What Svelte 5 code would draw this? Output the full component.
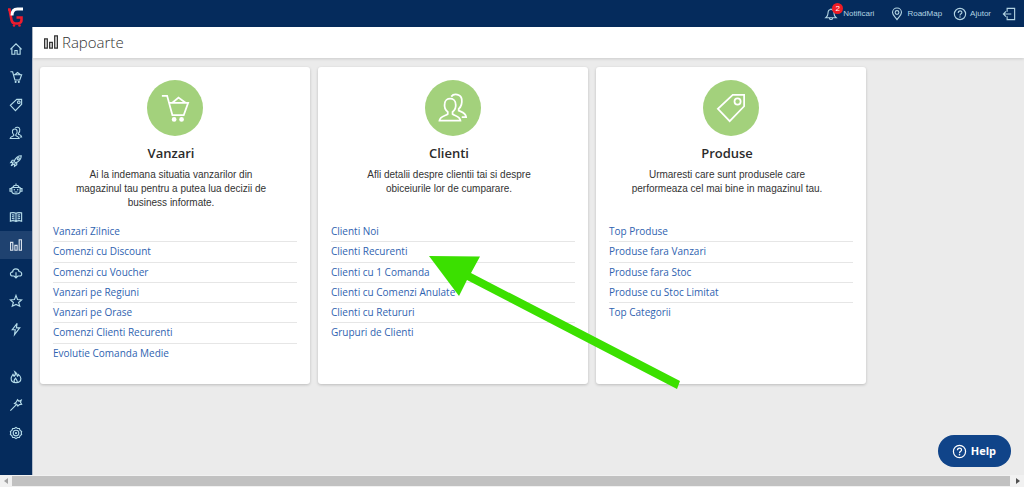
<script>
  const mainNav = [
    { icon: 'home', label: 'Acasa' },
    { icon: 'cart', label: 'Comenzi' },
    { icon: 'tag', label: 'Produse' },
    { icon: 'users', label: 'Clienti' },
    { icon: 'rocket', label: 'Marketing' },
    { icon: 'robot', label: 'Automatizari' },
    { icon: 'book', label: 'Continut' },
    { icon: 'chart', label: 'Rapoarte', active: true },
    { icon: 'cloud', label: 'Import' },
    { icon: 'star', label: 'Aplicatii' },
    { icon: 'bolt', label: 'Integrari' }
  ];

  const toolNav = [
    { icon: 'flame', label: 'Noutati' },
    { icon: 'wand', label: 'Design' },
    { icon: 'gear', label: 'Setari' }
  ];

  const cards = [
    {
      icon: 'cart',
      title: 'Vanzari',
      text: 'Ai la indemana situatia vanzarilor din magazinul tau pentru a putea lua decizii de business informate.',
      links: ['Vanzari Zilnice', 'Comenzi cu Discount', 'Comenzi cu Voucher', 'Vanzari pe Regiuni', 'Vanzari pe Orase', 'Comenzi Clienti Recurenti', 'Evolutie Comanda Medie']
    },
    {
      icon: 'users',
      title: 'Clienti',
      text: 'Afli detalii despre clientii tai si despre obiceiurile lor de cumparare.',
      links: ['Clienti Noi', 'Clienti Recurenti', 'Clienti cu 1 Comanda', 'Clienti cu Comenzi Anulate', 'Clienti cu Retururi', 'Grupuri de Clienti'],
      arrow: true
    },
    {
      icon: 'tag',
      title: 'Produse',
      text: 'Urmaresti care sunt produsele care performeaza cel mai bine in magazinul tau.',
      links: ['Top Produse', 'Produse fara Vanzari', 'Produse fara Stoc', 'Produse cu Stoc Limitat', 'Top Categorii']
    }
  ];
</script>

{#snippet icon(name)}
  <svg class="icon" viewBox="0 0 32 32" aria-hidden="true">
    {#if name === 'home'}
      <path d="M1 17 16 2l15 15M5 14v16h8V20h6v10h8V14" />
    {:else if name === 'cart'}
      <path d="M1 2h6l6 22h13l5-14H10M13 10l7-6 8 6" />
      <circle class="solid" cx="15" cy="29" r="2.700" /><circle class="solid" cx="23.500" cy="29" r="2.700" />
    {:else if name === 'tag'}
      <path d="M18 1h13v13L14.500 31 1 17Z" /><circle cx="23.5" cy="8.5" r="3.500" />
    {:else if name === 'users'}
      <path d="M10 20.500C7 18 6 14 6.500 11c.5-7.500 12-7.500 12.500 0 .5 3-.5 7-3.500 9.500V23c2 2 8.500 2 9 7.500H.5C1 25 8 25 10 23Z" />
      <path d="M14 3c3-4 11-3 12 3 .5 4 0 8-3.500 11v2c3 1.500 8 2 8.500 7.500h-5" />
    {:else if name === 'rocket'}
      <path d="M11 17C15 7 22 2 30 2c0 8-5 15-15 19ZM12 14H6l-4 6 8-1M18 20v6l-6 4 1-8M8 21l-5 8 8-5" />
      <circle cx="22" cy="10" r="3" />
    {:else if name === 'robot'}
      <path d="M5 12h22v10c0 4-5 7-11 7S5 26 5 22ZM8 12c0-4 3-6 8-6s8 2 8 6M16 6V1M5 15H0v7h5M27 15h5v7h-5M12 24h8" />
      <circle class="solid" cx="11.5" cy="18" r="2" /><circle class="solid" cx="20.500" cy="18" r="2" />
    {:else if name === 'book'}
      <path d="M16 6C11 3 6 4 1 5v22c5-2 10-2 15 1 5-3 10-3 15-1V5c-5-1-10-2-15 1ZM16 6v22M5 10l7 1M5 15l7 1M5 20l7 1M20 11l7-1M20 16l7-1M20 21l7-1" />
    {:else if name === 'chart'}
      <path d="M1.500 9h6v21h-6ZM13 17h6v13h-6ZM24.500 2h6v28h-6Z" />
    {:else if name === 'cloud'}
      <path d="M11 24H8C-1 24-1 13 7 13 8 2 23 3 24 12c10 1 9 12 1 12h-4M16 14v15M11 24l5 5 5-5" />
    {:else if name === 'star'}
      <path d="m16 1 4 11 11 1-8 7 3 10-10-5-10 5 3-10-8-7 11-1Z" />
    {:else if name === 'bolt'}
      <path d="M19 1 6 18h8l-2 13 14-18h-9Z" />
    {:else if name === 'flame'}
      <path d="M13 2c7 4 5 10 7 12 2-1 2-3 2-5 4 3 7 7 7 11 0 7-6 11-13 11S3 27 3 20c0-5 3-8 5-11 1 2 1 4 3 5 4-3 4-8 2-12Z" />
      <path d="M12 30c-3-4-1-7 3-11 1 4 6 6 4 11" />
    {:else if name === 'wand'}
      <path d="M1 31 17 15M20 2l4 4 6-3-2 6 3 5-6 1-4 4-3-5-6-2 5-4Z" />
    {:else if name === 'gear'}
      <path d="m16 1 4 3 5 0 2 5 4 3-1 4 1 4-4 3-2 5-5 0-4 3-4-3-5 0-2-5-4-3 1-4-1-4 4-3 2-5 5 0Z" />
      <circle cx="16" cy="16" r="7.500" /><circle class="solid" cx="16" cy="16" r="3" />
    {:else if name === 'bell'}
      <path d="M16 4c-6 0-8 4-8 10 0 7-3 9-6 12h28c-3-3-6-5-6-12 0-6-2-10-8-10ZM16 4V1M12 27c0 5 8 5 8 0" />
    {:else if name === 'pin'}
      <path d="M16 31C10 23 4 18 4 12a12 12 0 0 1 24 0c0 6-6 11-12 19Z" /><circle cx="16" cy="12" r="5" />
    {:else if name === 'help'}
      <circle cx="16" cy="16" r="15" />
      <path d="M11 13c0-7 10-7 10-1 0 4-5 3-5 8" /><circle class="solid" cx="16" cy="24" r="2" />
    {:else if name === 'exit'}
      <path d="M11 10V1h20v30H11v-9M22 16H1M8 9l-7 7 7 7" />
    {/if}
  </svg>
{/snippet}

<div class="app">
  <div class="shell">
    <aside>
      <a class="brand" href="#home" aria-label="Panou principal">
        <svg viewBox="0 0 16 20" aria-hidden="true">
          <path d="M0 2.500h1.500L3.500 13c.5 2.500 1.500 3.500 4 3.500h2.500c2.500 0 3.500-1.500 3.500-3.500v-2.500H8.500" fill="none" stroke="#ee1c2e" stroke-width="2.600" />
          <path d="M4 8.500C4 4 6 2 9.500 2H15" fill="none" stroke="#fff" stroke-width="3" />
          <circle cx="6" cy="18.500" r="1.300" fill="#ee1c2e" /><circle cx="11.500" cy="18.500" r="1.300" fill="#ee1c2e" />
        </svg>
      </a>
      <nav aria-label="Meniu">
        {#each mainNav as item}
          <a class:active={item.active} href="#{item.icon}" aria-label={item.label}>{@render icon(item.icon)}</a>
        {/each}
      </nav>
      <nav class="tools" aria-label="Unelte">
        {#each toolNav as item}
          <a href="#{item.icon}" aria-label={item.label}>{@render icon(item.icon)}</a>
        {/each}
      </nav>
    </aside>

    <div class="page">
      <header class="topbar">
        <a class="bell" href="#notificari">{@render icon('bell')}<span class="badge">2</span>Notificari</a>
        <a href="#roadmap">{@render icon('pin')}RoadMap</a>
        <a href="#ajutor">{@render icon('help')}Ajutor</a>
        <a href="#iesire" aria-label="Iesire">{@render icon('exit')}</a>
      </header>
      <div class="heading">
        {@render icon('chart')}
        <h1>Rapoarte</h1>
      </div>
      <main>
        {#each cards as card}
          <section>
            <div class="disc">{@render icon(card.icon)}</div>
            <div class="intro">
              <h2>{card.title}</h2>
              <p>{card.text}</p>
            </div>
            <ul>
              {#each card.links as link}
                <li><a href="#raport">{link}</a></li>
              {/each}
            </ul>
            {#if card.arrow}
              <svg class="arrow" viewBox="0 0 252 133" aria-hidden="true">
                <path d="M0 0 51 .5 42 17l209 108-3 8L38 24l-8 16Z" fill="#3be000" />
              </svg>
            {/if}
          </section>
        {/each}
      </main>
      <button class="help">{@render icon('help')}Help</button>
    </div>
  </div>

  <div class="scroll" aria-hidden="true">
    <svg viewBox="0 0 12 12"><path d="M8 3v6L4 6Z" fill="#a3a3a3" /></svg>
    <div class="thumb"></div>
    <svg viewBox="0 0 12 12"><path d="M4 3v6l4-3Z" fill="#505050" /></svg>
  </div>
</div>

<style>
  :global(body) {
    margin: 0;
    background: #ebebeb;
  }
  .app {
    min-height: 100vh;
    display: flex;
    flex-direction: column;
    font-family: "Liberation Sans", Arial, sans-serif;
    font-size: 10px;
    color: #333;
  }
  .shell {
    flex: 1;
    display: flex;
  }
  a {
    text-decoration: none;
    color: inherit;
  }
  .icon {
    display: block;
    flex: none;
    width: 12px;
    height: 12px;
    fill: none;
    stroke: currentColor;
    stroke-width: 3;
    overflow: visible;
  }
  .icon .solid {
    fill: currentColor;
    stroke: none;
  }
  aside {
    flex: none;
    width: 32px;
    background: #052b5c;
    color: #b5dcea;
    border-right: 1px solid #b4bdca;
    box-sizing: content-box;
  }
  .brand {
    display: block;
    height: 28px;
    padding: 7px 8px 0;
  }
  .brand svg {
    display: block;
    width: 16px;
    height: 20px;
  }
  nav a {
    display: flex;
    align-items: center;
    justify-content: center;
    height: 28px;
  }
  nav a.active {
    background: #1f4270;
    color: #dbe3ec;
  }
  .tools {
    margin-top: 20px;
  }
  .page {
    flex: 1;
    min-width: 0;
    position: relative;
    background: #ebebeb;
  }
  .topbar {
    display: flex;
    align-items: center;
    justify-content: flex-end;
    gap: 12px;
    height: 27px;
    margin-left: -1px;
    padding-right: 9px;
    background: #052b5c;
    color: #b2d3e2;
    font-size: 8px;
  }
  .topbar a {
    display: flex;
    align-items: center;
    gap: 4px;
  }
  .topbar .bell {
    position: relative;
    gap: 6px;
    margin-right: 5px;
  }
  .badge {
    position: absolute;
    left: 7px;
    top: -5px;
    width: 11px;
    height: 11px;
    border-radius: 50%;
    background: #ee1c25;
    color: #fff;
    font-size: 8px;
    line-height: 11px;
    text-align: center;
  }
  .heading {
    display: flex;
    align-items: center;
    gap: 4px;
    height: 29px;
    padding: 0 11px 2px;
    background: #fff;
    box-shadow: 0 1px 3px #0002;
  }
  .heading .icon {
    width: 14px;
    height: 14px;
  }
  h1,
  h2 {
    margin: 0;
    font-family: "Open Sans", sans-serif;
  }
  h1 {
    font-size: 15px;
    font-weight: 300;
    line-height: 24px;
  }
  main {
    display: flex;
    gap: 8px;
    padding: 9px 7px;
  }
  section {
    position: relative;
    flex: 0 1 270px;
    box-sizing: border-box;
    padding: 13px 13px 20px;
    border-radius: 3px;
    background: #fff;
    box-shadow: 0 1px 3px #0003;
  }
  .disc {
    display: flex;
    align-items: center;
    justify-content: center;
    width: 56px;
    height: 56px;
    margin: 0 auto;
    border-radius: 50%;
    background: #a3d17c;
    color: #fff;
  }
  .disc .icon {
    width: 28px;
    height: 28px;
    stroke-width: 2;
  }
  .intro {
    padding: 8px 28px 12px 20px;
    text-align: center;
  }
  h2 {
    font-size: 13px;
    font-weight: 600;
    line-height: 18px;
    color: #2b2b2b;
  }
  p {
    min-height: 42px;
    margin: 6px 0 0;
    line-height: 14px;
  }
  ul {
    display: grid;
    grid-template-rows: repeat(7, 1fr);
    height: 142px;
    margin: 0;
    padding: 0;
    list-style: none;
    font-family: "Open Sans", sans-serif;
  }
  li {
    box-sizing: border-box;
    line-height: 19px;
    border-bottom: 1px solid #e6e6e6;
  }
  li:last-child {
    border-bottom: 0;
  }
  li a {
    color: #2f63b0;
  }
  .arrow {
    position: absolute;
    z-index: 2;
    left: 111px;
    top: 189px;
    width: 252px;
    height: 133px;
  }
  section:has(.arrow) {
    z-index: 1;
  }
  .help {
    position: absolute;
    right: 13px;
    bottom: 8px;
    display: flex;
    align-items: center;
    gap: 5px;
    height: 32px;
    padding: 0 15px;
    border: 0;
    border-radius: 16px;
    background: #104489;
    color: #fff;
    font: 700 11px/16px "Open Sans", sans-serif;
  }
  .help .icon {
    width: 13px;
    height: 13px;
    stroke-width: 3;
  }
  .scroll {
    display: flex;
    height: 12px;
    background: #f1f1f1;
  }
  .scroll svg {
    flex: none;
    width: 12px;
    height: 12px;
  }
  .thumb {
    flex: 1;
    margin: 1px 2px 1px 0;
    background: #c1c1c1;
  }
</style>
